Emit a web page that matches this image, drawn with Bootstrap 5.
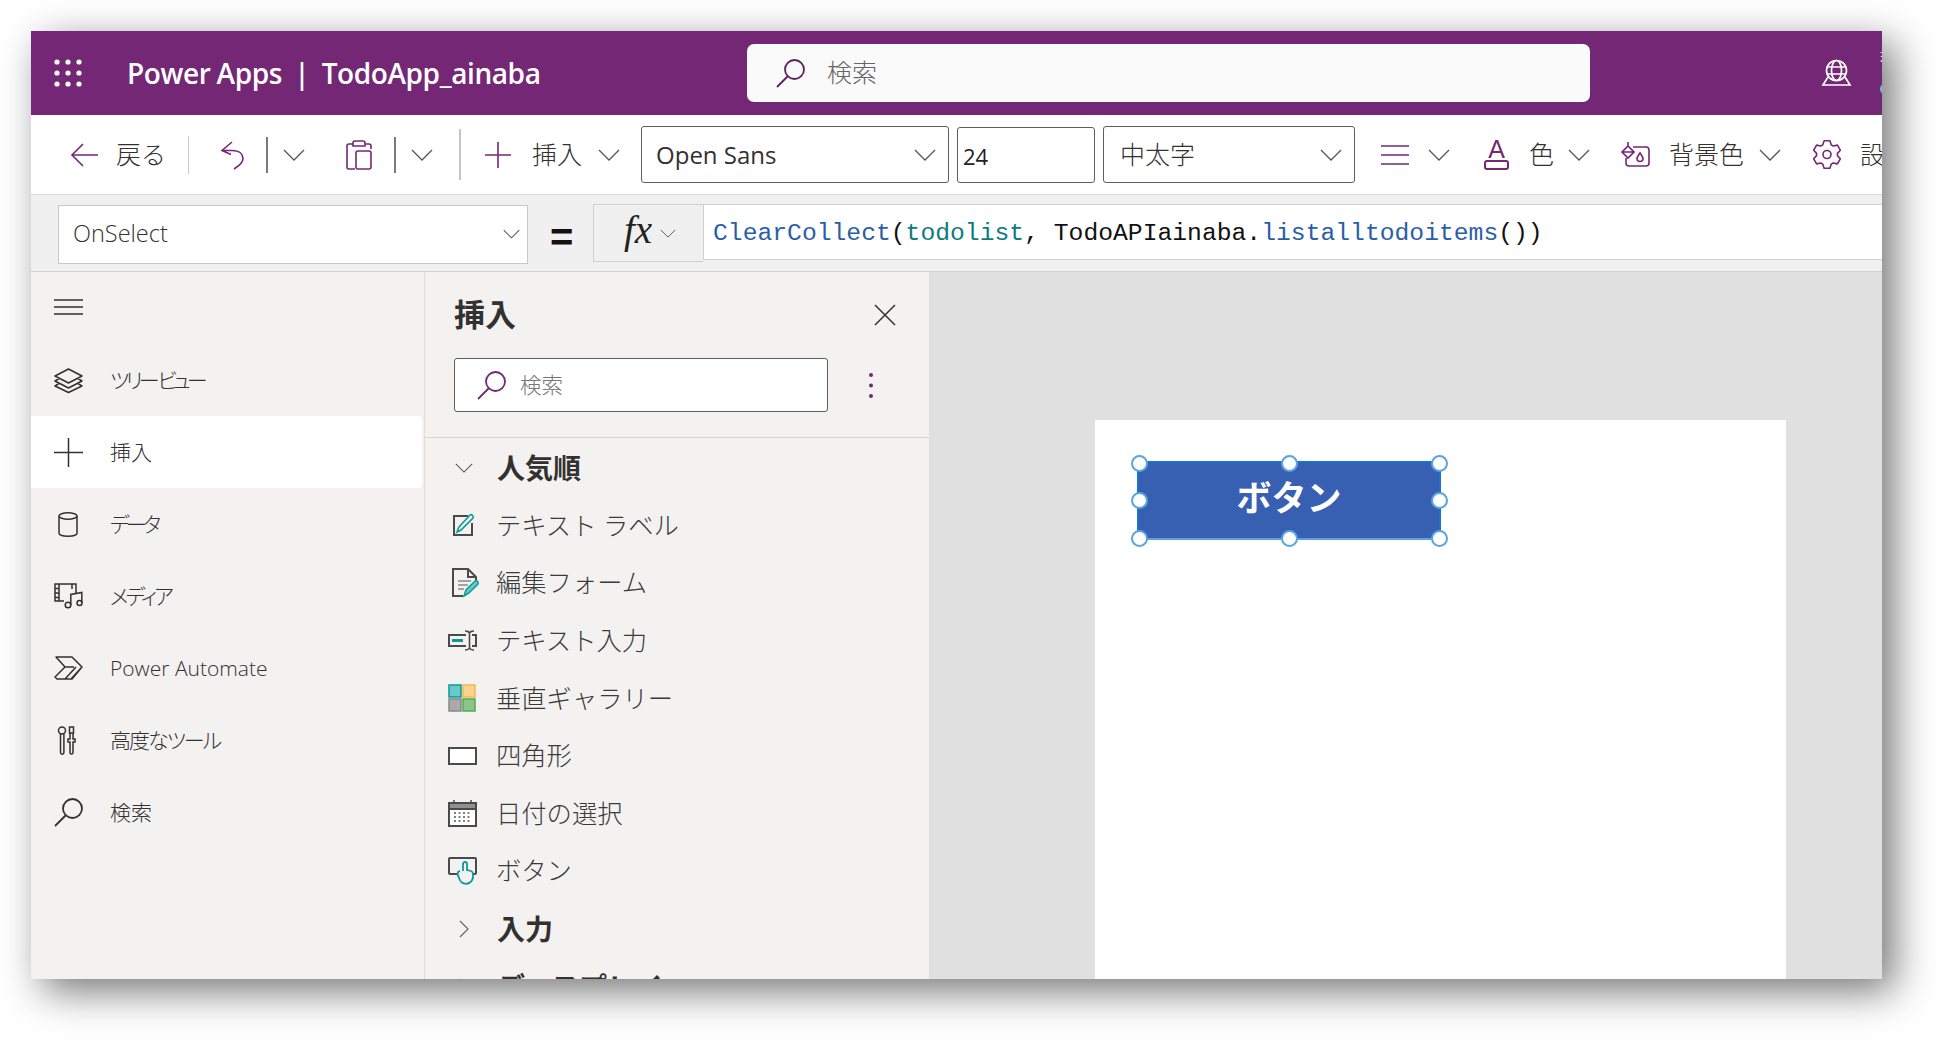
<!DOCTYPE html>
<html lang="ja">
<head>
<meta charset="UTF-8">
<title>Power Apps</title>
<link href="https://cdn.jsdelivr.net/npm/bootstrap@5.3.0/dist/css/bootstrap.min.css" rel="stylesheet">
<style>
    body { background: #fff; margin: 0; font-family: "Open Sans", "Noto Sans CJK JP", sans-serif; color: #323130; }
    .stage { padding: 31px 0 0 31px; height: 1041px; overflow: hidden; }
    .app-win { width: 1851px; height: 948px; overflow: hidden; box-shadow: 12px 12px 38px rgba(0,0,0,.54); background: #fff; }
    svg { display: block; flex: none; overflow: visible; fill: none; }
    .pu { stroke: #742774; stroke-width: 1.6; }
    .dk { stroke: #323130; stroke-width: 1.5; }
    .gy { stroke: #4a4a4a; stroke-width: 2; }

    /* header */
    .app-head { height: 84px; background: #742774; color: #fff; padding-left: 23px; }
    .app-head > * { flex: none; }
    .app-title { margin-left: 45px; width: 440px; font-size: 28px; font-weight: 600; white-space: pre; letter-spacing: -.4px; word-spacing: -.7px; }
    .head-search { margin-left: 180px; width: 843px; height: 58px; background: #fafafa; border-radius: 7px; padding-left: 29px; color: #666; font-size: 25px; font-weight: 300; }
    .head-search span { margin-left: 22px; }
    .globe { margin-left: 232px; }
    .clip-bits { margin-left: 29px; font-size: 13px; line-height: 13px; gap: 19px; }
    .clip-dot { width: 12px; height: 12px; border-radius: 50%; background: #7fb4e6; }

    /* toolbar */
    .toolbar { height: 80px; border-bottom: 1px solid #d9d9d9; padding-left: 39px; white-space: nowrap; font-size: 25px; font-weight: 300; }
    .tsep { width: 1px; height: 38px; background: #c8c8c8; flex: none; }
    .tsep-d { width: 2px; height: 36px; background: #7a7a7a; flex: none; }
    .tsep-l { width: 2px; height: 51px; background: #c4c4c4; flex: none; }
    .drop { height: 57px; border: 1px solid #605e5c; border-radius: 3px; padding: 0 12px 0 14px; flex: none; }
    .drop-font { width: 308px; font-weight: 400; font-size: 24px; }
    .drop-wt { width: 252px; padding-left: 16px; }
    .size-in { width: 138px; height: 56px; flex: none; padding: 3px 5px 0; border: 1px solid #605e5c; border-radius: 3px; font-size: 22px; color: #222; box-shadow: none; }
    .cap-a { width: 25px; height: 29px; flex: none; }
    .cap-a b { display: block; height: 19px; line-height: 19px; font-size: 25px; font-weight: 400; color: #742774; text-align: center; font-family: "Liberation Sans", sans-serif; }
    .cap-a i { display: block; margin-top: 1px; height: 10px; border: 2px solid #742774; border-radius: 3px; }
    .set-txt { width: 60px; flex: none; }
    .g8 { margin-left: 8px; } .g14 { margin-left: 14px; } .g15 { margin-left: 15px; } .g16 { margin-left: 16px; } .g18 { margin-left: 18px; }
    .g19 { margin-left: 19px; } .g20 { margin-left: 20px; } .g21 { margin-left: 21px; } .g22 { margin-left: 22px; }
    .g24 { margin-left: 24px; } .g26 { margin-left: 26px; } .g31 { margin-left: 31px; }
    .g32 { margin-left: 32px; } .g34 { margin-left: 34px; } .g41 { margin-left: 41px; }

    /* formula bar */
    .fbar { height: 77px; background: #f0f0f0; border-bottom: 1px solid #cfcfcf; padding: 9px 0 0 27px; }
    .prop-box { width: 470px; height: 59px; margin-top: 1px; background: #fff; border: 1px solid #c8c8c8; padding: 0 7px 2px 14px; font-size: 23.5px; font-weight: 300; }
    .eq-sign { width: 21px; margin: 8px 22px 0 22px; font-size: 40px; line-height: 50px; font-weight: 700; color: #111; text-align: center; font-family: "Liberation Sans", sans-serif; }
    .fx-box { width: 110px; height: 58px; border: 1px solid #cfcfcf; border-right: 0; padding-left: 30px; }
    .fx-box em { font-family: "Liberation Serif", serif; font-size: 39px; line-height: 36px; color: #222; width: 36px; margin-top: -6px; }
    .code-box { flex: 1; height: 56px; background: #fff; border: 1px solid #cfcfcf; border-right: 0; padding: 4px 0 0 9px; font-family: "Liberation Mono", monospace; font-size: 24.7px; color: #111; white-space: pre; }
    .c-fn { color: #2a5ea8; } .c-var { color: #0b7d80; }

    /* body */
    .app-body { height: 707px; }
    .side { width: 393px; background: #f3f2f1; flex: none; }
    .side-burger { height: 72px; padding: 27px 0 0 23px; }
    .side .nav-link { height: 72px; width: 391px; padding: 2px 0 0 23px; color: #323130; font-size: 21px; font-weight: 300; border-radius: 0 4px 4px 0; font-feature-settings: "palt"; }
    .side .nav-link.sel { background: #fff; }
    .side-ico { width: 56px; flex: none; margin-top: -2px; }
    .tight-2 { letter-spacing: -2px; } .tight-3 { letter-spacing: -2.8px; } .tight-4 { letter-spacing: -3.8px; }
    .pane { width: 505px; background: #f3f2f1; border-left: 1px solid #dcdcdc; flex: none; overflow: hidden; }
    .pane-top { height: 86px; padding: 0 33px 0 29px; }
    .pane-top h2 { font-size: 31px; font-weight: 700; margin: 0; color: #323130; }
    .pane-find { padding: 0 0 25px 29px; border-bottom: 1px solid #d6d6d6; }
    .find-box { width: 374px; height: 54px; background: #fff; border: 1px solid #605e5c; border-radius: 3px; padding-left: 22px; color: #777; font-size: 21.5px; font-weight: 300; }
    .find-box span { margin-left: 14px; }
    .kebab { margin-left: 41px; }
    .sect-row { height: 58px; padding: 1px 0 0 30px; font-size: 28px; font-weight: 700; color: #323130; white-space: nowrap; }
    .sect-ico { width: 42px; flex: none; }
    .item-row { height: 57.6px; padding: 2px 0 0 23px; font-size: 25.3px; font-weight: 300; color: #3b3a39; white-space: nowrap; }
    .item-ico { width: 48px; flex: none; margin-top: -1px; }
    .canvas-area { flex: 1; background: #e0e0e0; padding: 148px 0 0 166px; }
    .screen-w { width: 691px; height: 559px; background: #fff; padding: 41px 42px; }
    .bt-sel { position: relative; width: 304px; height: 79px; padding-bottom: 4px; background: #3860b2; border: 2px solid #1a73c8; border-bottom-color: #5ba3e0; color: #fff; font-size: 35px; font-weight: 700; }
    .hnd { position: absolute; width: 17px; height: 17px; margin: -8.5px 0 0 -8.5px; border-radius: 50%; background: #fff; border: 2px solid #5ba3e0; }
    .hx0 { left: 0; } .hx1 { left: 50%; } .hx2 { left: 100%; }
    .hy0 { top: 0; } .hy1 { top: 50%; } .hy2 { top: 100%; }
</style>
</head>
<body>
<svg width="0" height="0" class="position-absolute">
    <symbol id="chev" viewBox="0 0 22 12"><path d="M1 1l10 10L21 1" stroke="#555" stroke-width="1.3" fill="none"/></symbol>
    <symbol id="mag" viewBox="0 0 29 29"><circle cx="18.5" cy="10.5" r="9.5" fill="none" stroke="currentColor" stroke-width="1.8"/><path d="M11.5 17.5L1 28" fill="none" stroke="currentColor" stroke-width="1.8"/></symbol>
</svg>

<div class="stage">
<div class="app-win d-flex flex-column">

    <div class="app-head d-flex align-items-center">
        <svg width="28" height="28" viewBox="0 0 28 28"><g fill="#fff"><circle cx="3" cy="3" r="2.6"/><circle cx="14" cy="3" r="2.6"/><circle cx="25" cy="3" r="2.6"/><circle cx="3" cy="14" r="2.6"/><circle cx="14" cy="14" r="2.6"/><circle cx="25" cy="14" r="2.6"/><circle cx="3" cy="25" r="2.6"/><circle cx="14" cy="25" r="2.6"/><circle cx="25" cy="25" r="2.6"/></g></svg>
        <div class="app-title">Power Apps  |  TodoApp_ainaba</div>
        <div class="head-search d-flex align-items-center">
            <svg width="29" height="29" style="color:#5c1f5c"><use href="#mag"/></svg>
            <span>検索</span>
        </div>
        <svg class="globe" width="29" height="26" viewBox="0 0 29 26" stroke="#fff" stroke-width="1.7"><circle cx="14.5" cy="10.5" r="10"/><ellipse cx="14.5" cy="10.5" rx="5" ry="10"/><path d="M5 7h19M5 14h19M6 17L1 25h27l-5-8"/></svg>
        <div class="clip-bits d-flex flex-column">
            <span>環</span>
            <div class="clip-dot"></div>
        </div>
    </div>

    <div class="toolbar d-flex align-items-center">
        <svg width="28" height="24" viewBox="0 0 28 24" class="pu"><path d="M28 12H2M13 1L2 12l11 11"/></svg>
        <span class="g18">戻る</span>
        <div class="tsep g22"></div>
        <svg class="g31 pu" width="24" height="28" viewBox="0 0 24 28"><path d="M12 1L2 9.500l9 4M2 9.500h10c8 0 11 4 11 8 0 3-2 5-4 7l-5 3.500"/></svg>
        <div class="tsep-d g22"></div>
        <svg class="g15" width="22" height="12"><use href="#chev"/></svg>
        <svg class="g41 pu" width="26" height="30" viewBox="0 0 26 30"><path d="M7 4H3a2 2 0 0 0-2 2v21a2 2 0 0 0 2 2h6M19 4h4a2 2 0 0 1 2 2v3M7 6V3a2 2 0 0 1 2-2h8a2 2 0 0 1 2 2v3z"/><rect x="10" y="11" width="15" height="18" rx="2"/></svg>
        <div class="tsep-d g22"></div>
        <svg class="g15" width="22" height="12"><use href="#chev"/></svg>
        <div class="tsep-l g26"></div>
        <svg class="g24 pu" width="26" height="26" viewBox="0 0 26 26"><path d="M0 13h26M13 0v26"/></svg>
        <span class="g21">挿入</span>
        <svg class="g16" width="22" height="12"><use href="#chev"/></svg>
        <div class="drop drop-font g21 d-flex align-items-center justify-content-between">
            <span>Open Sans</span>
            <svg width="22" height="12"><use href="#chev"/></svg>
        </div>
        <input class="form-control size-in g8" value="24">
        <div class="drop drop-wt g8 d-flex align-items-center justify-content-between">
            <span>中太字</span>
            <svg width="22" height="12"><use href="#chev"/></svg>
        </div>
        <svg class="g26 pu" width="28" height="20" viewBox="0 0 28 20"><path d="M0 1h28M0 10h28M0 19h28"/></svg>
        <svg class="g19" width="22" height="12"><use href="#chev"/></svg>
        <div class="cap-a g34"><b>A</b><i></i></div>
        <span class="g20">色</span>
        <svg class="g14" width="22" height="12"><use href="#chev"/></svg>
        <svg class="g31 pu" width="29" height="27" viewBox="0 0 29 27"><path d="M12 6h13a3 3 0 0 1 3 3v13a3 3 0 0 1-3 3H8a3 3 0 0 1-3-3v-5"/><path d="M7 1v4M1 11l6-6 6 6-6 6zM1 11h12"/><path d="M19 12c2 3 3 4 3 5.500a3 3 0 0 1-6 0c0-1.500 1-2.500 3-5.500z"/></svg>
        <span class="g19">背景色</span>
        <svg class="g15" width="22" height="12"><use href="#chev"/></svg>
        <svg class="g32 pu" width="28" height="29" viewBox="0 0 28 29"><path stroke-linejoin="round" d="M16.910 .81L18.270 4.910L20.170 6.010L24.400 5.130L27.310 10.170L24.440 13.400V15.600L27.310 18.830L24.400 23.870L20.170 22.990L18.270 24.090L16.910 28.190H11.090L9.730 24.090L7.830 22.990L3.600 23.870L.69 18.830L3.560 15.600V13.400L.69 10.170L3.600 5.130L7.830 6.010L9.730 4.910L11.090 .81Z"/><circle cx="14" cy="14.500" r="4"/></svg>
        <span class="g19 set-txt">設定</span>
    </div>

    <div class="fbar d-flex align-items-start">
        <div class="prop-box d-flex align-items-center justify-content-between">
            <span>OnSelect</span>
            <svg width="17" height="10"><use href="#chev"/></svg>
        </div>
        <div class="eq-sign">=</div>
        <div class="fx-box d-flex align-items-center">
            <em>fx</em>
            <svg width="16" height="9"><use href="#chev"/></svg>
        </div>
        <div class="code-box d-flex align-items-center"><span><span class="c-fn">ClearCollect</span>(<span class="c-var">todolist</span>, TodoAPIainaba.<span class="c-fn">listalltodoitems</span>())</span></div>
    </div>

    <div class="app-body d-flex">
        <div class="side">
            <div class="side-burger">
                <svg width="29" height="16" viewBox="0 0 29 16" class="dk"><path d="M0 1h29M0 8h29M0 15h29"/></svg>
            </div>
            <nav class="nav flex-column">
                <a class="nav-link d-flex align-items-center" href="#"><div class="side-ico"><svg width="29" height="25" viewBox="0 0 29 25" class="dk"><path stroke-linejoin="round" d="M14.500 1L28 8l-13.500 7L1 8zM5 10.500L1 13l13.500 7L28 13l-4-2.500M5 15.500L1 18l13.500 6.500L28 18l-4-2.500"/></svg></div><span class="tight-4">ツリー ビュー</span></a>
                <a class="nav-link sel d-flex align-items-center" href="#"><div class="side-ico"><svg width="29" height="29" viewBox="0 0 29 29" class="dk"><path d="M0 14.500h29M14.500 0v29"/></svg></div>挿入</a>
                <a class="nav-link d-flex align-items-center" href="#"><div class="side-ico"><svg width="20" height="25" viewBox="0 0 20 25" class="dk ms-1"><ellipse cx="10" cy="4" rx="9" ry="3.200"/><path d="M1 4v17c0 2 4 3.200 9 3.200s9-1.200 9-3.200V4"/></svg></div><span class="tight-4">データ</span></a>
                <a class="nav-link d-flex align-items-center" href="#"><div class="side-ico"><svg width="29" height="26" viewBox="0 0 29 26" class="dk"><path d="M10 18H1V1h21v9M1 5.500h4M1 10h4M1 14.500h4M5 1v17M18 1v5"/><circle cx="14" cy="22" r="2.800"/><circle cx="25.500" cy="20" r="2.500"/><path d="M16.800 22V11.500l11-2V20"/></svg></div><span class="tight-3">メディア</span></a>
                <a class="nav-link d-flex align-items-center" href="#"><div class="side-ico"><svg width="29" height="24" viewBox="0 0 29 24" class="dk"><path stroke-linejoin="round" d="M2 1h16l10 10-10 12H3L1 21l10-10zM2 1l9 10h9M11 23L22 11M17 23L27 12"/></svg></div>Power Automate</a>
                <a class="nav-link d-flex align-items-center" href="#"><div class="side-ico"><svg width="18" height="29" viewBox="0 0 18 29" class="dk ms-1"><circle cx="4" cy="4.500" r="3.500"/><path d="M2.500 8v18.500a1.700 1.700 0 0 0 3.400 0V8M11.500 1h4v6h-4zM12 7v6H10v3h2v10.500a1.500 1.500 0 0 0 3 0V16h2v-3h-2V7"/></svg></div><span class="tight-2">高度なツール</span></a>
                <a class="nav-link d-flex align-items-center" href="#"><div class="side-ico"><svg width="29" height="29" style="color:#323130"><use href="#mag"/></svg></div>検索</a>
            </nav>
        </div>

        <div class="pane">
            <div class="pane-top d-flex align-items-center justify-content-between">
                <h2>挿入</h2>
                <svg width="22" height="22" viewBox="0 0 22 22" class="dk"><path d="M1 1l20 20M21 1L1 21"/></svg>
            </div>
            <div class="pane-find d-flex align-items-center">
                <div class="find-box d-flex align-items-center">
                    <svg width="29" height="29" style="color:#742774"><use href="#mag"/></svg>
                    <span>検索</span>
                </div>
                <svg class="kebab" width="4" height="25" viewBox="0 0 4 25"><g fill="#742774"><circle cx="2" cy="2" r="2"/><circle cx="2" cy="12.500" r="2"/><circle cx="2" cy="23" r="2"/></g></svg>
            </div>
            <div class="sect-row d-flex align-items-center">
                <div class="sect-ico"><svg width="18" height="10"><use href="#chev"/></svg></div>人気順
            </div>
            <div class="item-row d-flex align-items-center">
                <div class="item-ico"><svg class="ms-1" width="24" height="24" viewBox="0 0 24 24"><path class="gy" d="M20 10v12H2V3h14"/><path d="M5 19l2-5L18 2c1.500-1.200 4 1 3 3L9 17z" stroke="#0a9a9a" stroke-width="1.600"/></svg></div>テキスト ラベル
            </div>
            <div class="item-row d-flex align-items-center">
                <div class="item-ico"><svg class="ms-1" width="27" height="29" viewBox="0 0 27 29"><path class="gy" d="M11 28H1V1h15l8 8v3M16 1v8h8"/><path d="M6 13h13M6 17h10M6 21h6" stroke="#888" stroke-width="1.600"/><path d="M12 28l2-6 9-9c2-1 4 1 3 3l-9 9z" fill="#69c9c9" stroke="#0a9a9a" stroke-width="1.500"/></svg></div>編集フォーム
            </div>
            <div class="item-row d-flex align-items-center">
                <div class="item-ico"><svg width="29" height="21" viewBox="0 0 29 21"><path class="gy" d="M18 5H1v11h17M24 5h4v11h-4"/><path d="M4 9h11v3H4z" fill="#0a9a9a"/><path d="M17 1c3 0 4 1 4.500 2V18c-.500 1-1.500 2-4.500 2M26 1c-3 0-4 1-4.500 2M26 20c-3 0-4-1-4.500-2" stroke="#4a4a4a" stroke-width="1.600"/></svg></div>テキスト入力
            </div>
            <div class="item-row d-flex align-items-center">
                <div class="item-ico"><svg width="28" height="28" viewBox="0 0 28 28"><rect x="1" y="1" width="12" height="12" fill="#69c9c9" stroke="#0a9a9a" stroke-width="1.500"/><rect x="15" y="1" width="12" height="12" fill="#fbd38d" stroke="#f5b74e" stroke-width="1.500"/><rect x="1" y="15" width="12" height="12" fill="#aaa" stroke="#888" stroke-width="1.500"/><rect x="15" y="15" width="12" height="12" fill="#8bc58b" stroke="#4cae4f" stroke-width="1.500"/></svg></div>垂直ギャラリー
            </div>
            <div class="item-row d-flex align-items-center">
                <div class="item-ico"><svg width="29" height="18" viewBox="0 0 29 18"><rect x="1" y="1" width="27" height="16" fill="#fff" stroke="#4a4a4a" stroke-width="2"/></svg></div>四角形
            </div>
            <div class="item-row d-flex align-items-center">
                <div class="item-ico"><svg width="29" height="27" viewBox="0 0 29 27"><rect x="1" y="3" width="27" height="23" fill="#fff" stroke="#4a4a4a" stroke-width="2"/><rect x="1" y="3" width="27" height="6" fill="#909090" stroke="#4a4a4a" stroke-width="2"/><path d="M6 0v3M23 0v3" stroke="#4a4a4a" stroke-width="1.500"/><path d="M6 13h18M6 17h18M6 21h18" stroke="#555" stroke-width="1.600" stroke-dasharray="2 2.500"/></svg></div>日付の選択
            </div>
            <div class="item-row d-flex align-items-center">
                <div class="item-ico"><svg width="29" height="27" viewBox="0 0 29 27"><path d="M9 17H2a1 1 0 0 1-1-1V2a1 1 0 0 1 1-1h25a1 1 0 0 1 1 1v14a1 1 0 0 1-1 1h-2" stroke="#4a4a4a" stroke-width="2"/><path d="M15 14V7a2 2 0 0 1 4 0v6l4 1c1.500.500 2 1.500 2 3v2a7 7 0 0 1-14 1.500c-2-3-2-6 1-6.500" fill="#f3f2f1" stroke="#0a9a9a" stroke-width="1.800"/></svg></div>ボタン
            </div>
            <div class="sect-row d-flex align-items-center">
                <div class="sect-ico"><svg class="ms-1" width="10" height="18" viewBox="0 0 10 18"><path d="M1 1l8 8-8 8" stroke="#666" stroke-width="1.200"/></svg></div>入力
            </div>
            <div class="sect-row d-flex align-items-center">
                <div class="sect-ico"><svg class="ms-1" width="10" height="18" viewBox="0 0 10 18"><path d="M1 1l8 8-8 8" stroke="#666" stroke-width="1.200"/></svg></div>ディスプレイ
            </div>
        </div>

        <div class="canvas-area">
            <div class="screen-w">
                <div class="bt-sel d-flex align-items-center justify-content-center">
                    ボタン
                    <i class="hnd hx0 hy0"></i><i class="hnd hx1 hy0"></i><i class="hnd hx2 hy0"></i>
                    <i class="hnd hx0 hy1"></i><i class="hnd hx2 hy1"></i>
                    <i class="hnd hx0 hy2"></i><i class="hnd hx1 hy2"></i><i class="hnd hx2 hy2"></i>
                </div>
            </div>
        </div>
    </div>

</div>
</div>
<script src="https://cdn.jsdelivr.net/npm/bootstrap@5.3.0/dist/js/bootstrap.bundle.min.js"></script>
</body>
</html>
